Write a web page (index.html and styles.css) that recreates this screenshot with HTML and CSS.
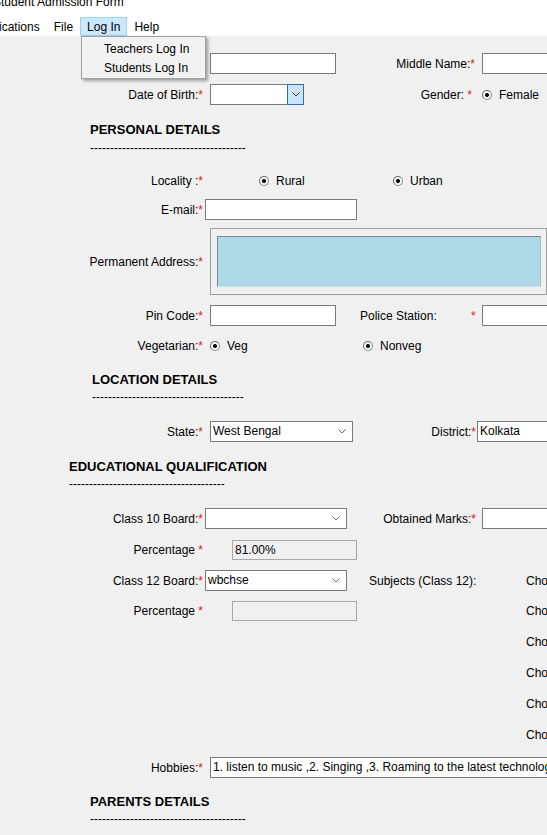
FILE: index.html
```html
<!DOCTYPE html>
<html lang="en">
<head>
<meta charset="utf-8">
<title>Student Admission Form</title>
<link rel="stylesheet" href="styles.css">
</head>
<body>
<div class="titlebar"><span class="title">Student Admission Form</span></div>
<nav class="menubar">
  <span class="mi mi-first">Applications</span>
  <span class="mi">File</span>
  <span class="mi mi-active">Log In</span>
  <span class="mi">Help</span>
</nav>
<div class="dropdown">
  <div class="dd-item">Teachers Log In</div>
  <div class="dd-item">Students Log In</div>
</div>

<main class="form">
  <div class="row r-name">
    <label class="lbl">First Name:<span class="req">*</span></label>
    <span class="tb ml7 w126"></span>
    <label class="lbl2 w139">Middle Name:<span class="req">*</span></label>
    <span class="tb ml7 w100"></span>
  </div>

  <div class="row r-dob">
    <label class="lbl">Date of Birth:<span class="req">*</span></label>
    <span class="tb date ml7 w94"><span class="date-btn"><svg class="chev" viewBox="0 0 8 5" width="8" height="5"><polyline points="0.5,0.5 4,4 7.5,0.5" fill="none" stroke="#333" stroke-width="1"/></svg></span></span>
    <label class="lbl2 w168">Gender: <span class="req">*</span></label>
    <span class="opt ml10"><span class="radio"></span><span>Female</span></span>
  </div>

  <h2 class="heading h-personal">PERSONAL DETAILS</h2>
  <div class="dashes d-personal">---------------------------------------</div>

  <div class="row r-text r-locality">
    <label class="lbl">Locality :<span class="req">*</span></label>
    <span class="opt ml56 w134"><span class="radio"></span><span>Rural</span></span>
    <span class="opt"><span class="radio"></span><span>Urban</span></span>
  </div>

  <div class="row r-email">
    <label class="lbl">E-mail:<span class="req">*</span></label>
    <span class="tb ml2 w152"></span>
  </div>

  <div class="row r-address">
    <label class="lbl">Permanent Address:<span class="req">*</span></label>
    <div class="group ml7">
      <div class="addr"></div>
    </div>
  </div>

  <div class="row r-pin">
    <label class="lbl">Pin Code:<span class="req">*</span></label>
    <span class="tb ml7 w126"></span>
    <label class="lbl-police">Police Station:</label>
    <span class="req req-police">*</span>
    <span class="tb w100"></span>
  </div>

  <div class="row r-text r-veg">
    <label class="lbl">Vegetarian:<span class="req">*</span></label>
    <span class="opt ml7 w153"><span class="radio"></span><span>Veg</span></span>
    <span class="opt"><span class="radio"></span><span>Nonveg</span></span>
  </div>

  <h2 class="heading h-location">LOCATION DETAILS</h2>
  <div class="dashes d-location">--------------------------------------</div>

  <div class="row r-state">
    <label class="lbl">State:<span class="req">*</span></label>
    <span class="tb combo ml7 w143"><span>West Bengal</span><svg class="chev" viewBox="0 0 8 5" width="8" height="5"><polyline points="0.5,0.5 4,4 7.5,0.5" fill="none" stroke="#6a6a6a" stroke-width="1"/></svg></span>
    <label class="lbl2 w123">District:<span class="req">*</span></label>
    <span class="tb combo ml1 w100"><span>Kolkata</span></span>
  </div>

  <h2 class="heading h-edu">EDUCATIONAL QUALIFICATION</h2>
  <div class="dashes d-edu">---------------------------------------</div>

  <div class="row r-c10">
    <label class="lbl">Class 10 Board:<span class="req">*</span></label>
    <span class="tb combo ml2 w142"><span></span><svg class="chev" viewBox="0 0 8 5" width="8" height="5"><polyline points="0.5,0.5 4,4 7.5,0.5" fill="none" stroke="#6a6a6a" stroke-width="1"/></svg></span>
    <label class="lbl2 w129">Obtained Marks:<span class="req">*</span></label>
    <span class="tb ml6 w100"></span>
  </div>

  <div class="row r-pct1">
    <label class="lbl">Percentage <span class="req">*</span></label>
    <span class="tb tb-ro ml29 w125">81.00%</span>
  </div>

  <div class="row r-c12">
    <label class="lbl">Class 12 Board:<span class="req">*</span></label>
    <span class="tb combo ml2 w142"><span>wbchse</span><svg class="chev" viewBox="0 0 8 5" width="8" height="5"><polyline points="0.5,0.5 4,4 7.5,0.5" fill="none" stroke="#6a6a6a" stroke-width="1"/></svg></span>
    <label class="lbl-subjects">Subjects (Class 12):</label>
    <span class="choose">Choose Subject</span>
  </div>

  <div class="row r-pct2">
    <label class="lbl">Percentage <span class="req">*</span></label>
    <span class="tb tb-ro ml29 w125"></span>
    <span class="choose ml169">Choose Subject</span>
  </div>

  <div class="row r-text r-cho"><span class="choose pl526">Choose Subject</span></div>
  <div class="row r-text r-cho"><span class="choose pl526">Choose Subject</span></div>
  <div class="row r-text r-cho"><span class="choose pl526">Choose Subject</span></div>
  <div class="row r-text r-cho"><span class="choose pl526">Choose Subject</span></div>

  <div class="row r-hobbies">
    <label class="lbl">Hobbies:<span class="req">*</span></label>
    <span class="tb tb-text ml7 w420">1. listen to music ,2. Singing ,3. Roaming to the latest technology trends</span>
  </div>

  <h2 class="heading h-parents">PARENTS DETAILS</h2>
  <div class="dashes d-parents">---------------------------------------</div>
</main>
</body>
</html>
```

FILE: styles.css
```css
html {
  overflow: hidden;
}
body {
  margin: 0;
  padding: 0;
  width: 547px;
  height: 835px;
  overflow: hidden;
  position: relative;
  background: #f0f0f0;
  font-family: "Liberation Sans", Arial, sans-serif;
  font-size: 12px;
  color: #000;
}

/* title + menu */
.titlebar {
  height: 17px;
  background: #fff;
  overflow: hidden;
  white-space: nowrap;
}
.title {
  display: block;
  margin: -5px 0 0 -7px;
  line-height: 14px;
}
.menubar {
  display: flex;
  height: 19px;
  background: #fff;
  white-space: nowrap;
}
.mi {
  flex: none;
  box-sizing: border-box;
  height: 19px;
  padding: 0 6px;
  border: 1px solid transparent;
  line-height: 19px;
}
.mi-first { margin-left: -32px; }
.mi-active {
  background: #cce8ff;
  border-color: #99d1ff;
}
.dropdown {
  position: absolute;
  left: 81px;
  top: 36px;
  width: 125px;
  height: 43px;
  box-sizing: border-box;
  padding-top: 3px;
  background: #f2f2f2;
  border: 1px solid #a0a0a0;
  box-shadow: 2px 2px 3px rgba(0, 0, 0, 0.35);
  z-index: 5;
}
.dd-item {
  height: 19px;
  line-height: 19px;
  padding-left: 22px;
  white-space: nowrap;
}

/* form */
.form { display: block; }
.row {
  display: flex;
  align-items: center;
  white-space: nowrap;
}
.r-text { height: 18px; }
.lbl {
  flex: none;
  width: 203px;
  text-align: right;
}
.lbl2 {
  flex: none;
  text-align: right;
}
.req { color: #e0141e; }

.tb {
  flex: none;
  box-sizing: border-box;
  height: 21px;
  padding: 0 2px;
  background: #fff;
  border: 1px solid #7a7a7a;
  line-height: 19px;
  overflow: hidden;
}
.tb-ro {
  height: 20px;
  line-height: 18px;
  background: #f0f0f0;
  border-color: #a8a8a8;
}
.tb-text { padding-left: 2px; }

.combo {
  display: flex;
  align-items: center;
  justify-content: space-between;
  padding: 0 6px 0 2px;
}
.chev {
  display: block;
  flex: none;
}
.date {
  display: flex;
  justify-content: flex-end;
  padding: 0;
  overflow: visible;
}
.date-btn {
  box-sizing: border-box;
  width: 17px;
  height: 21px;
  margin: -1px -1px -1px 0;
  display: flex;
  align-items: center;
  justify-content: center;
  background: #cce4f7;
  border: 1px solid #2f6fb0;
}

.opt {
  flex: none;
  display: flex;
  align-items: center;
  gap: 7px;
}
.radio {
  flex: none;
  box-sizing: border-box;
  width: 10px;
  height: 10px;
  border-radius: 50%;
  border: 1px solid #8c8c8c;
  border-top-color: #6a6a6a;
  border-left-color: #6a6a6a;
  background: radial-gradient(circle at center, #111 0, #111 1.6px, #f6f6f6 2.3px);
}

.group {
  flex: none;
  box-sizing: border-box;
  width: 337px;
  height: 67px;
  padding: 7px 5px 7px 6px;
  border: 1px solid #a0a0a0;
}
.addr {
  box-sizing: border-box;
  width: 324px;
  height: 51px;
  background: #add8e6;
  border: 1px solid;
  border-color: #6e8d98 #9fbfca #c8e3ec #6e8d98;
}

.lbl-police {
  flex: none;
  width: 111px;
  margin-left: 24px;
}
.req-police {
  flex: none;
  width: 11px;
}
.lbl-subjects {
  flex: none;
  width: 157px;
  margin-left: 22px;
}
.choose { flex: none; }
.pl526 { padding-left: 526px; }

/* headings */
.heading {
  margin: 0;
  height: 16px;
  line-height: 16px;
  font-size: 13px;
  font-weight: bold;
  white-space: nowrap;
}
.dashes {
  height: 14px;
  line-height: 14px;
  font-size: 12px;
  white-space: nowrap;
}
.h-personal, .d-personal, .h-parents, .d-parents { padding-left: 90px; }
.h-location, .d-location { padding-left: 92px; }
.h-edu, .d-edu { padding-left: 69px; }

/* vertical rhythm */
.r-name { margin-top: 17px; }
.r-dob { margin-top: 10px; }
.h-personal { margin-top: 17px; }
.d-personal { margin-top: 3px; }
.r-locality { margin-top: 17px; }
.r-email { margin-top: 9px; }
.r-address { margin-top: 8px; }
.r-pin { margin-top: 10px; }
.r-veg { margin-top: 11px; }
.h-location { margin-top: 17px; }
.d-location { margin-top: 2px; }
.r-state { margin-top: 17px; }
.h-edu { margin-top: 17px; }
.d-edu { margin-top: 2px; }
.r-c10 { margin-top: 17px; }
.r-pct1 { margin-top: 11px; }
.r-c12 { margin-top: 10px; }
.r-pct2 { margin-top: 10px; }
.r-cho { margin-top: 13px; }
.r-pct2 + .r-cho { margin-top: 12px; }
.r-hobbies { margin-top: 13px; }
.h-parents { margin-top: 16px; }
.d-parents { margin-top: 2px; }

/* widths and gaps */
.w94 { width: 94px; }
.w100 { width: 100px; }
.w123 { width: 123px; }
.w125 { width: 125px; }
.w126 { width: 126px; }
.w129 { width: 129px; }
.w134 { width: 134px; }
.w139 { width: 139px; }
.w142 { width: 142px; }
.w143 { width: 143px; }
.w152 { width: 152px; }
.w153 { width: 153px; }
.w168 { width: 168px; }
.w420 { width: 420px; }
.ml1 { margin-left: 1px; }
.ml2 { margin-left: 2px; }
.ml6 { margin-left: 6px; }
.ml7 { margin-left: 7px; }
.ml10 { margin-left: 10px; }
.ml29 { margin-left: 29px; }
.ml56 { margin-left: 56px; }
.ml169 { margin-left: 169px; }
```
